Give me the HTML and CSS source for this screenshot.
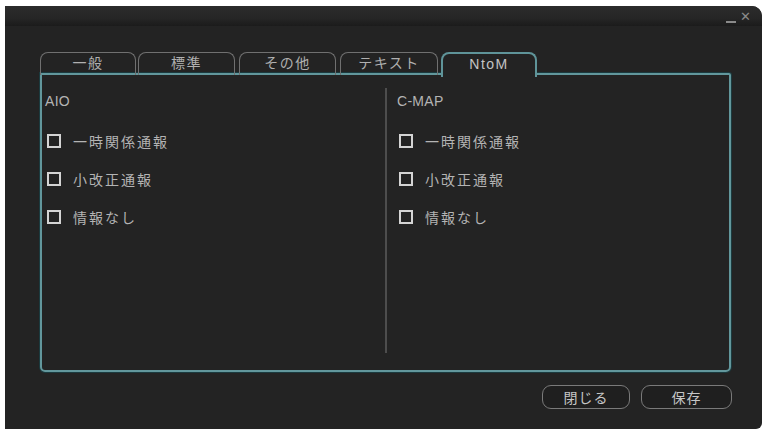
FILE: index.html
```html
<!DOCTYPE html>
<html lang="ja">
<head>
<meta charset="utf-8">
<title>NtoM</title>
<link rel="stylesheet" href="styles.css">
</head>
<body>
<div class="window">
  <div class="titlebar">
    <span class="ctl-min"></span>
    <span class="ctl-close">✕</span>
  </div>
  <div class="content">
    <div class="tabs">
      <div class="tab t1">一般</div>
      <div class="tab t2">標準</div>
      <div class="tab t3">その他</div>
      <div class="tab t4">テキスト</div>
      <div class="tab active">NtoM</div>
    </div>
    <div class="panel">
      <div class="col col-left">
        <div class="heading">AIO</div>
        <ul class="list">
          <li class="row"><span class="box"></span><span class="label">一時関係通報</span></li>
          <li class="row"><span class="box"></span><span class="label">小改正通報</span></li>
          <li class="row"><span class="box"></span><span class="label">情報なし</span></li>
        </ul>
      </div>
      <div class="divider"></div>
      <div class="col col-right">
        <div class="heading">C-MAP</div>
        <ul class="list">
          <li class="row"><span class="box"></span><span class="label">一時関係通報</span></li>
          <li class="row"><span class="box"></span><span class="label">小改正通報</span></li>
          <li class="row"><span class="box"></span><span class="label">情報なし</span></li>
        </ul>
      </div>
    </div>
    <div class="actions">
      <button class="btn btn-close">閉じる</button>
      <button class="btn btn-save">保存</button>
    </div>
  </div>
</div>
</body>
</html>
```

FILE: styles.css
```css
html, body {
  margin: 0;
  padding: 0;
  background: #ffffff;
}

body {
  font-family: "Liberation Sans", "Noto Sans CJK JP", sans-serif;
  color: #b8b8b8;
}

.window {
  margin: 6px 0 0 5px;
  width: 757px;
  height: 423px;
  background: #232323;
  border-top-right-radius: 10px;
  border-bottom-right-radius: 6px;
  overflow: hidden;
}

.titlebar {
  height: 20px;
  background: linear-gradient(#2c2c2c, #262626 60%, #1b1b1b);
  display: flex;
  justify-content: flex-end;
  align-items: flex-start;
  padding-right: 11px;
  color: #8a8a8a;
  gap: 4px;
}

.ctl-min {
  width: 10px;
  height: 2px;
  margin-top: 15px;
  background: #8a8a8a;
}

.ctl-close {
  font-size: 13px;
  line-height: 13px;
  margin-top: 4px;
}

.content {
  padding: 26px 0 0 35px;
  width: 691px;
}

.tabs {
  display: flex;
  height: 23px;
  position: relative;
  z-index: 1;
  margin-bottom: -2px;
}

.tab {
  flex: none;
  box-sizing: border-box;
  width: 96px;
  height: 23px;
  border: 1.5px solid #707070;
  border-bottom: none;
  border-radius: 8px 8px 0 0;
  text-align: center;
  font-size: 14px;
  line-height: 20px;
  letter-spacing: 1.5px;
  color: #b0b0b0;
}

.t2 { margin-left: 2px; width: 97px; }
.t3 { margin-left: 4px; width: 97px; }
.t4 { margin-left: 4px; width: 98px; }

.tab.active {
  margin-left: 3px;
  width: 96px;
  height: 25px;
  border: 2px solid #5f9499;
  border-bottom: none;
  background: #232323;
  color: #c4c4c4;
}

.panel {
  height: 295px;
  border: 2px solid #62979c;
  border-radius: 0 2px 5px 5px;
  display: flex;
  box-shadow: 0 0 0 1px #1b3a3e;
}

.col {
  padding-top: 17px;
}

.col-left {
  width: 343px;
  padding-left: 3px;
  box-sizing: border-box;
}

.col-right {
  flex: 1;
  padding-left: 10px;
}

.divider {
  width: 2px;
  background: #4d4d4d;
  margin: 13px 0 17px;
}

.heading {
  font-size: 14px;
  line-height: 18px;
  color: #b4b4b4;
  letter-spacing: 0.3px;
}

.list {
  list-style: none;
  margin: 12px 0 0;
  padding: 0;
}

.row {
  display: flex;
  align-items: center;
  height: 38px;
}

.box {
  width: 10px;
  height: 10px;
  border: 2px solid #d4d4d4;
  margin-left: 2px;
  margin-right: 12px;
}

.label {
  font-size: 14px;
  letter-spacing: 2px;
  color: #b4b4b4;
}

.actions {
  display: flex;
  justify-content: flex-end;
  gap: 11px;
  margin-top: 13px;
}

.btn {
  height: 24px;
  border: 1.5px solid #7a7a7a;
  border-radius: 9px;
  background: #1f1f1f;
  color: #c6c6c6;
  font-family: "Liberation Sans", "Noto Sans CJK JP", sans-serif;
  font-size: 14px;
  padding: 0;
  letter-spacing: 1px;
}

.btn-close {
  width: 88px;
}

.btn-save {
  width: 91px;
  margin-right: -1px;
}
```
